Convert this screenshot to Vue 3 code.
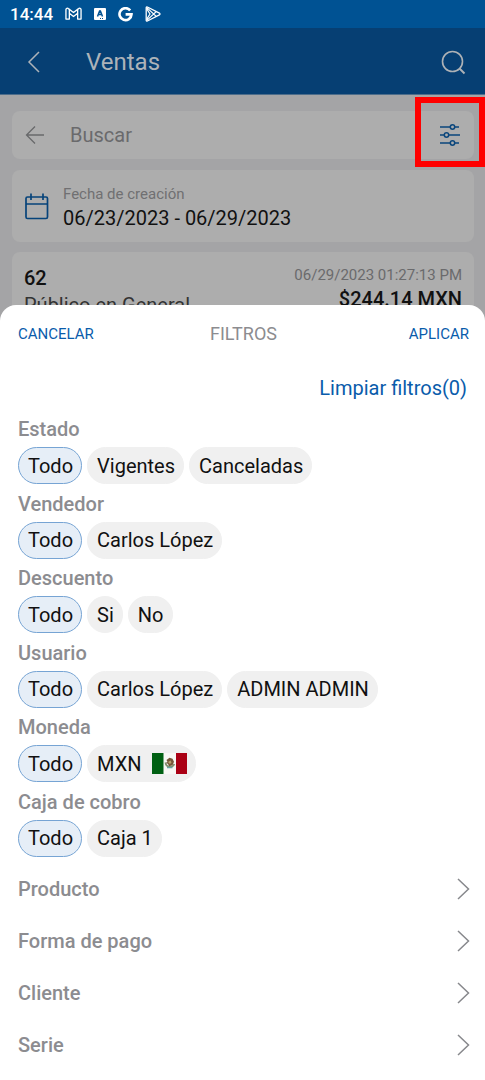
<script setup>
import { ref } from 'vue'

const query = ref('')

const groups = ref([
  { label: 'Estado', selected: 'Todo', options: ['Todo', 'Vigentes', 'Canceladas'] },
  { label: 'Vendedor', selected: 'Todo', options: ['Todo', 'Carlos López'] },
  { label: 'Descuento', selected: 'Todo', options: ['Todo', 'Si', 'No'] },
  { label: 'Usuario', selected: 'Todo', options: ['Todo', 'Carlos López', 'ADMIN ADMIN'] },
  { label: 'Moneda', selected: 'Todo', options: ['Todo', 'MXN'] },
  { label: 'Caja de cobro', selected: 'Todo', options: ['Todo', 'Caja 1'] },
])

const links = ['Producto', 'Forma de pago', 'Cliente', 'Serie']

function clearFilters() {
  groups.value.forEach((group) => {
    group.selected = 'Todo'
  })
}
</script>

<template>
  <div class="page">
    <div class="behind">
      <div class="status">
        <span class="clock">14:44</span>
        <svg width="17" height="14" viewBox="0 0 18 14" fill="none" stroke="#fff" stroke-width="1.4" stroke-linejoin="round">
          <path d="M1 12.4V2.3C1 .8 2.6.5 3.6 1.3L9 5.4l5.4-4.1C15.4.5 17 .8 17 2.3v10.1h-3.6V6.3L9 9.6 4.6 6.3v6.1z" />
          <path d="M4.6 6.3V2.2M13.4 6.3V2.2" />
        </svg>
        <svg width="12" height="12" viewBox="0 0 12 12">
          <rect width="12" height="12" rx="1" fill="#fff" />
          <path d="M3.5 8.6L5.6 3h.8l2.1 5.6M4.4 6.6h3.2" fill="none" stroke="#005293" stroke-width="1.5" />
          <path d="M6 10.5h1M8 10.5h1" stroke="#005293" />
        </svg>
        <svg width="15" height="15" viewBox="0 0 15 15" fill="none" stroke="#fff" stroke-width="2.6">
          <path d="M12.2 3.4A6 6 0 1 0 13.5 7.4H7.6" />
        </svg>
        <svg width="16" height="16" viewBox="0 0 16 16" fill="none" stroke="#fff" stroke-width="1.3" stroke-linejoin="round">
          <path d="M1.2 1.8Q1.2.5 2.4 1l12 6.1q1.2.9 0 1.8l-12 6.1q-1.2.5-1.2-.8z" />
          <path d="M1.6 1.4l9.6 9M1.6 14.6l9.6-9M1.5 2.5L5 8l-3.5 5.5" />
        </svg>
      </div>

      <header class="bar">
        <button type="button" aria-label="Volver">
          <svg width="14" height="22" viewBox="0 0 14 22" fill="none" stroke="#adb3b9" stroke-width="1.5">
            <path d="M12 1L2 11l10 10" />
          </svg>
        </button>
        <h1>Ventas</h1>
        <button type="button" aria-label="Buscar ventas">
          <svg width="25" height="25" viewBox="0 0 25 25" fill="none" stroke="#aeb2b6" stroke-width="1.6">
            <circle cx="11.5" cy="11.5" r="10" />
            <path d="M18.5 18.5l5 5" stroke-width="2" />
          </svg>
        </button>
      </header>

      <div class="feed">
        <div class="card search">
          <button type="button" aria-label="Cerrar búsqueda">
            <svg width="20" height="20" viewBox="0 0 20 20" fill="none" stroke="#68696b" stroke-width="1.3">
              <path d="M10 1.5L1.5 10l8.5 8.5M1.5 10H19" />
            </svg>
          </button>
          <input v-model="query" type="text" placeholder="Buscar" aria-label="Buscar" />
          <button type="button" class="tune" aria-label="Filtros">
            <svg width="22" height="24" viewBox="0 0 22 24" fill="none" stroke="#0a467c" stroke-width="1.5">
              <path d="M1 4h10.5M16 4h4M1 12h4.500M10 12h11M1 20h10.500M16 20h4" />
              <circle cx="13.5" cy="4" r="2.2" />
              <circle cx="7.5" cy="12" r="2.2" />
              <circle cx="13.5" cy="20" r="2.2" />
            </svg>
            <span class="marker"></span>
          </button>
        </div>

        <div class="card date">
          <svg width="24" height="27" viewBox="0 0 24 27" fill="none" stroke="#06437a" stroke-width="1.7">
            <rect x="1" y="4" width="21.5" height="21.5" rx="1.5" />
            <path d="M1 11h21.5M6 .5V7M18 .5V7" />
          </svg>
          <div>
            <p class="caption">Fecha de creación</p>
            <p>06/23/2023 - 06/29/2023</p>
          </div>
        </div>

        <article class="card sale">
          <div>
            <h2>62</h2>
            <p class="client">Público en General</p>
          </div>
          <div class="amounts">
            <p class="stamp">06/29/2023 01:27:13 PM</p>
            <p class="total">$244.14 MXN</p>
          </div>
        </article>
      </div>
    </div>

    <main class="sheet">
      <div class="sheet-head">
        <button type="button" class="action">CANCELAR</button>
        <h2>FILTROS</h2>
        <button type="button" class="action end">APLICAR</button>
      </div>
      <button type="button" class="clear" @click="clearFilters">Limpiar filtros(0)</button>

      <div class="groups">
        <section v-for="group in groups" :key="group.label">
          <h3>{{ group.label }}</h3>
          <div class="chips">
            <button
              v-for="option in group.options"
              :key="option"
              type="button"
              class="chip"
              :class="{ on: group.selected === option }"
              :aria-pressed="group.selected === option"
              @click="group.selected = option"
            >
              {{ option }}
              <svg v-if="option === 'MXN'" width="35" height="21" viewBox="0 0 35 21">
                <path d="M0 0h35v21H0z" fill="#f8f8f5" />
                <path d="M0 0h11.500v21H0z" fill="#006013" />
                <path d="M24 0h11v21H24z" fill="#aa0014" />
                <path d="M13.500 9.500a4.600 4.600 0 0 0 8.800 1.500" fill="none" stroke="#81906d" stroke-width="1.800" />
                <path d="M14.500 7l3-2.200 3 1 1.500 3-1.500 3.500-3.500 1-1-2.500-2.500-.8 2-1z" fill="#76583a" />
                <path d="M16 9l2.500-1.500 1 2-1.500 1.500z" fill="#b9a36e" />
                <path d="M15 14.500h5.500" stroke="#6ba3a0" stroke-width="1.500" />
              </svg>
            </button>
          </div>
        </section>
      </div>

      <nav>
        <a v-for="link in links" :key="link" href="#">
          {{ link }}
          <svg width="13" height="22" viewBox="0 0 13 22" fill="none" stroke="#87888c" stroke-width="1.5">
            <path d="M1 1l10.5 10L1 21" />
          </svg>
        </a>
      </nav>
    </main>
  </div>
</template>

<style>
body {
  margin: 0;
  background: #a4a4a6;
}
</style>

<style scoped>
.page {
  display: flex;
  flex-direction: column;
  min-height: 100vh;
  font-family: Roboto, "Liberation Sans", sans-serif;
  font-size: 20px;
  line-height: 24px;
  color: #111;
  background: #a4a4a6;
}
h1, h2, h3, p {
  margin: 0;
}
button {
  padding: 0;
  border: 0;
  background: none;
  font: inherit;
  color: inherit;
  cursor: pointer;
}
svg {
  display: block;
  flex: none;
}
.status {
  display: flex;
  align-items: center;
  gap: 12px;
  height: 28px;
  padding: 0 10px;
  color: #fff;
  background: #005293;
}
.clock {
  font-size: 17px;
  font-weight: 500;
}
.bar {
  display: flex;
  align-items: center;
  height: 64px;
  padding: 2px 19px 0 27px;
  background: #063f73;
  border-bottom: 1px solid #4d6d8b;
}
h1 {
  flex: 1;
  margin-left: 45px;
  font-size: 24px;
  font-weight: 400;
  line-height: 28px;
  color: #adb3b9;
}
.feed {
  display: grid;
  gap: 10px;
  padding: 16px 11px 0 12px;
}
.card {
  display: flex;
  align-items: center;
  border-radius: 8px;
  background: #adadad;
}
.search {
  height: 48px;
  margin-bottom: 1px;
  padding: 0 13px;
}
.search input {
  flex: 1;
  min-width: 0;
  margin-left: 25px;
  padding: 0;
  border: 0;
  outline: 0;
  background: none;
  font: inherit;
  color: #111;
}
.search input::placeholder {
  color: #6a6a6c;
  opacity: 1;
}
.tune {
  position: relative;
}
.marker {
  position: absolute;
  inset: -26px -24px -20px;
  border: 6px solid #f00;
}
.date {
  gap: 14px;
  padding: 12px 13px;
}
.caption {
  font-size: 15px;
  color: #707072;
}
.sale {
  justify-content: space-between;
  align-items: flex-start;
  height: 57px;
  padding: 12px 12px 0;
  margin-bottom: -16px;
}
.sale h2 {
  font-size: 20px;
  font-weight: 500;
  line-height: 29px;
}
.client {
  color: #333;
}
.amounts {
  text-align: right;
}
.stamp {
  font-size: 15px;
  line-height: 23px;
  color: #6a6a6c;
}
.total {
  font-weight: 500;
}
.sheet {
  position: relative;
  display: flex;
  flex: 1;
  flex-direction: column;
  padding: 0 16px 9px 18px;
  border-radius: 16px 16px 0 0;
  background: #fff;
}
.sheet-head {
  display: grid;
  grid-template-columns: 1fr auto 1fr;
  align-items: center;
  height: 58px;
}
.sheet-head h2 {
  font-size: 18px;
  font-weight: 400;
  color: #8c8c90;
}
.action {
  justify-self: start;
  font-size: 15px;
  color: #0a5cab;
}
.end {
  justify-self: end;
}
.clear {
  align-self: flex-end;
  margin: 13px 2px;
  color: #0a5cab;
}
.groups {
  display: flex;
  flex: 1;
  flex-direction: column;
  justify-content: space-between;
  margin: 4px 0 6px;
}
h3 {
  font-size: 20px;
  font-weight: 500;
  color: #8c8c90;
}
.chips {
  display: flex;
  flex-wrap: wrap;
  gap: 5px;
  margin-top: 6px;
}
.chip {
  display: flex;
  align-items: center;
  gap: 10px;
  height: 37px;
  padding: 0 8px 0 9px;
  border: 1px solid #f0f0f0;
  border-radius: 19px;
  background: #f0f0f0;
}
.chip.on {
  border-color: #76a4d4;
  background: #e6eef7;
}
nav a {
  display: flex;
  align-items: center;
  justify-content: space-between;
  height: 52px;
  font-weight: 500;
  color: #8c8c90;
  text-decoration: none;
}
nav svg {
  margin-right: -1px;
}
</style>
